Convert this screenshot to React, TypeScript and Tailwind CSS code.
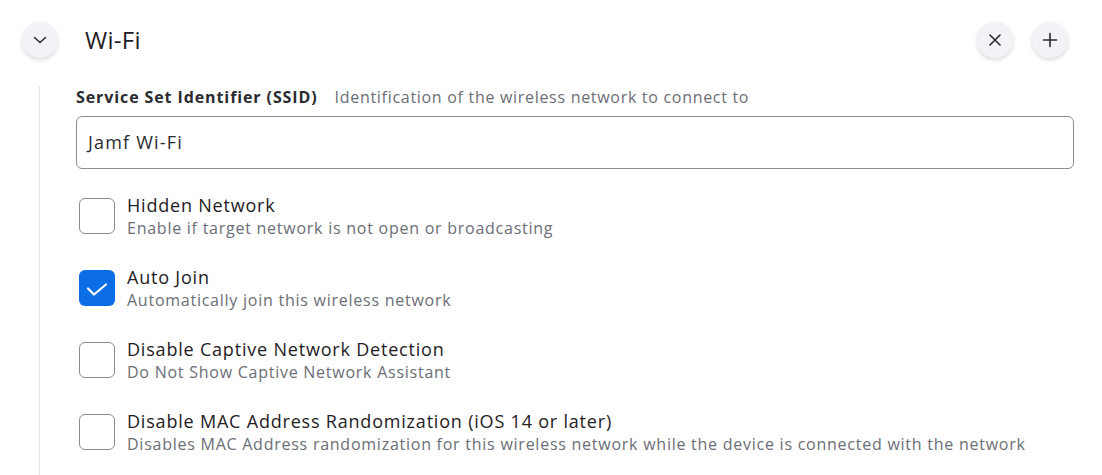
import React from "react";

const font = { fontFamily: '"Open Sans", "Liberation Sans", sans-serif' };

function Row({ title, desc, checked }: { title: string; desc: string; checked?: boolean }) {
  return (
    <div className="flex items-start gap-[12px] h-[36px]">
      <div
        className={
          "w-[36px] h-[36px] rounded-[6px] flex items-center justify-center shrink-0 " +
          (checked ? "bg-[#0b6ee6]" : "border border-[#8a8d93] bg-white")
        }
      >
        {checked && (
          <svg width="24" height="24" viewBox="0 0 24 24" fill="none" className="mt-[2px]">
            <path d="M3 11.5 L9 17.5 L21 7.5" stroke="white" strokeWidth="2.2" strokeLinecap="round" strokeLinejoin="round" />
          </svg>
        )}
      </div>
      <div className="flex flex-col -mt-[5px]">
        <div className="text-[18px] leading-[24px] tracking-[0.8px] text-[#1f2024]">{title}</div>
        <div className="text-[16px] leading-[22px] tracking-[0.75px] text-[#6b6e76]">{desc}</div>
      </div>
    </div>
  );
}

export default function App() {
  return (
    <div className="w-[1102px] h-[475px] bg-white overflow-hidden" style={font}>
      <div className="flex items-center pl-[22px] pr-[34px] pt-[22px]">
        <button className="w-[36px] h-[36px] rounded-full bg-[#f2f3f6] shadow-[0_2px_4px_rgba(0,0,0,0.15)] flex items-center justify-center">
          <svg width="16" height="16" viewBox="0 0 16 16" fill="none" className="-mt-[1px]">
            <path d="M2.5 5.5 L8 10.5 L13.5 5.5" stroke="#2a2b2f" strokeWidth="1.5" strokeLinecap="round" strokeLinejoin="round" />
          </svg>
        </button>
        <div className="ml-[27px] text-[24px] leading-[32px] tracking-[0.3px] text-[#1f2024]">Wi-Fi</div>
        <div className="ml-auto flex gap-[19px]">
          <button className="w-[36px] h-[36px] rounded-full bg-[#f2f3f6] shadow-[0_2px_4px_rgba(0,0,0,0.15)] flex items-center justify-center">
            <svg width="14" height="14" viewBox="0 0 14 14" fill="none">
              <path d="M2 2 L12 12 M12 2 L2 12" stroke="#2a2b2f" strokeWidth="1.6" strokeLinecap="round" />
            </svg>
          </button>
          <button className="w-[36px] h-[36px] rounded-full bg-[#f2f3f6] shadow-[0_2px_4px_rgba(0,0,0,0.15)] flex items-center justify-center">
            <svg width="16" height="16" viewBox="0 0 16 16" fill="none">
              <path d="M8 1.5 V14.5 M1.5 8 H14.5" stroke="#2a2b2f" strokeWidth="1.6" strokeLinecap="round" />
            </svg>
          </button>
        </div>
      </div>
      <div className="flex mt-[28px]">
        <div className="ml-[39px] w-[1px] bg-[#e3e5e8] h-[400px]" />
        <div className="ml-[36px] w-[998px]">
          <div className="flex items-baseline gap-[17px] -mt-[1px]">
            <span className="text-[16px] font-bold tracking-[0.9px] text-[#2a2b2f]">Service Set Identifier (SSID)</span>
            <span className="text-[16px] tracking-[0.7px] text-[#6b6e76]">Identification of the wireless network to connect to</span>
          </div>
          <div className="mt-[7px] h-[53px] border border-[#8a8d93] rounded-[6px] flex items-center px-[11px] text-[18px] tracking-[1.2px] text-[#2a2b2f]">
            Jamf Wi-Fi
          </div>
          <div className="mt-[29px] ml-[3px] flex flex-col gap-[36px]">
            <Row title="Hidden Network" desc="Enable if target network is not open or broadcasting" />
            <Row title="Auto Join" desc="Automatically join this wireless network" checked />
            <Row title="Disable Captive Network Detection" desc="Do Not Show Captive Network Assistant" />
            <Row
              title="Disable MAC Address Randomization (iOS 14 or later)"
              desc="Disables MAC Address randomization for this wireless network while the device is connected with the network"
            />
          </div>
        </div>
      </div>
    </div>
  );
}
